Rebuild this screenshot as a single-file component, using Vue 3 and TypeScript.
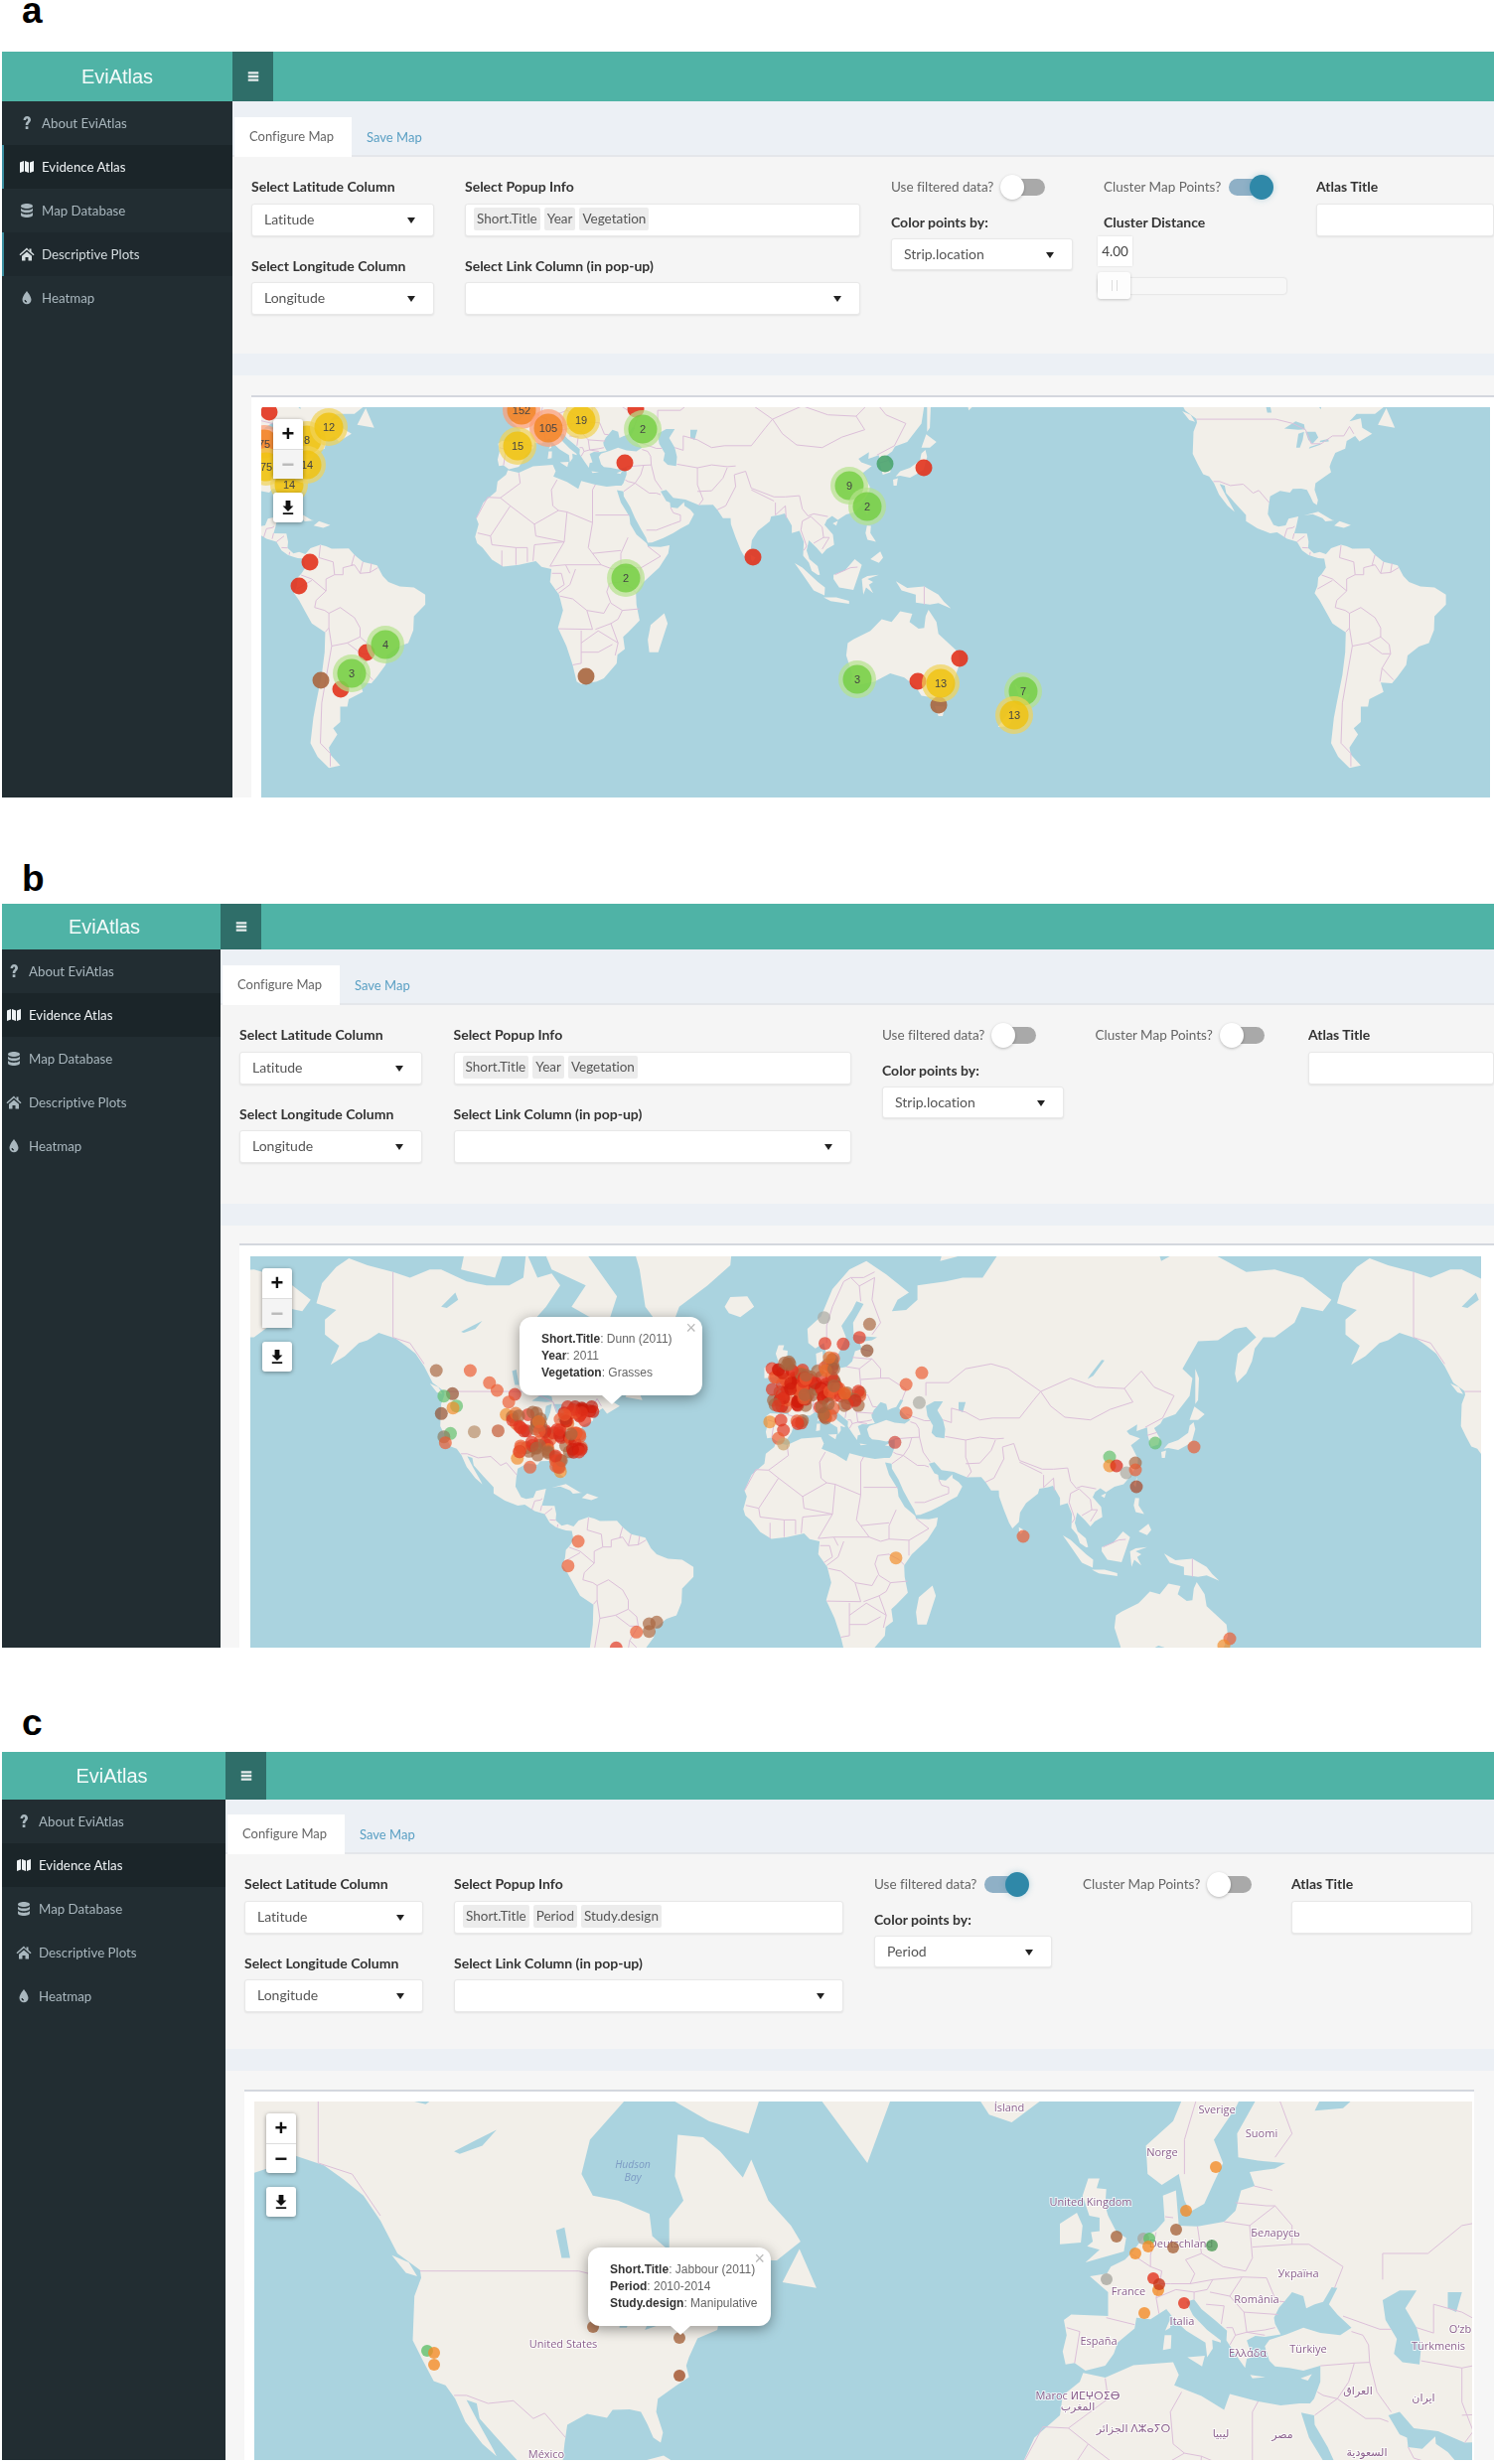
<template>
  <div class="page">
    <section
      v-for="panel in panels"
      :key="panel.id"
      class="figure"
      :class="`figure-${panel.id}`"
    >
      <div class="figure-tag">{{ panel.id }}</div>

      <div class="shell">
        <!-- 顶栏 -->
        <header class="topbar">
          <div class="brand">EviAtlas</div>
          <div class="menu-toggle">
            <svg viewBox="0 0 16 16" class="icon"><path d="M2 2.5h12v2.6H2zM2 6.7h12v2.6H2zM2 10.9h12v2.6H2z" /></svg>
          </div>
        </header>

        <div class="body">
          <!-- 侧边菜单 -->
          <aside class="sidebar">
            <div
              v-for="item in menu"
              :key="item.label"
              class="menu-item"
              :class="{
                active: item.label === 'Evidence Atlas',
                marked: panel.id === 'a' && item.label === 'Descriptive Plots',
              }"
            >
              <svg viewBox="0 0 16 16" class="icon"><path :d="item.icon" fill-rule="evenodd" /></svg>
              <span>{{ item.label }}</span>
            </div>
          </aside>

          <main class="content">
            <div class="tabs">
              <div class="tab current">Configure Map</div>
              <div class="tab">Save Map</div>
            </div>

            <div class="form">
              <div class="col">
                <div class="field-label">Select Latitude Column</div>
                <div class="select">Latitude<i class="caret" /></div>
                <div class="field-label second">Select Longitude Column</div>
                <div class="select">Longitude<i class="caret" /></div>
              </div>

              <div class="col">
                <div class="field-label">Select Popup Info</div>
                <div class="select chips">
                  <span
                    v-for="chip in panel.chips"
                    :key="chip"
                    class="chip"
                  >{{ chip }}</span>
                </div>
                <div class="field-label second">Select Link Column (in pop-up)</div>
                <div class="select"><i class="caret" /></div>
              </div>

              <div class="col">
                <div class="switch-row">
                  <span>Use filtered data?</span>
                  <span class="switch" :class="{ on: panel.filtered }"><i /></span>
                </div>
                <div class="field-label below">Color points by:</div>
                <div class="select short">{{ panel.colorBy }}<i class="caret" /></div>
              </div>

              <div class="col">
                <div class="switch-row">
                  <span>Cluster Map Points?</span>
                  <span class="switch" :class="{ on: panel.clustered }"><i /></span>
                </div>
                <template v-if="panel.clustered">
                  <div class="field-label below">Cluster Distance</div>
                  <div class="number-box">4.00</div>
                  <div class="slider"><span class="thumb" /></div>
                </template>
              </div>

              <div class="col">
                <div class="field-label">Atlas Title</div>
                <div class="select" />
              </div>
            </div>

            <div class="strip" />
            <div class="band" />

            <div class="card">
              <div class="map">
                <svg
                  class="map-svg"
                  :viewBox="panel.viewBox"
                  :width="panel.box[2]"
                  :height="panel.box[3]"
                >
                  <path :d="panel.land" fill="#f2efe9" />
                  <path :d="panel.water" fill="#aad3df" />
                  <path :d="panel.borders" class="border-line" />

                  <text
                    v-for="label in panel.labels"
                    :key="label.text"
                    :x="label.x"
                    :y="label.y"
                    class="map-label"
                    :class="{ water: label.water }"
                  >{{ label.text }}</text>

                  <circle
                    v-for="(dot, i) in panel.dots"
                    :key="i"
                    :cx="dot.x"
                    :cy="dot.y"
                    :r="panel.dotSize"
                    :fill="dot.color"
                    :opacity="panel.dotOpacity"
                  />

                  <g v-for="(c, i) in panel.clusters" :key="`c${i}`">
                    <circle :cx="c.x" :cy="c.y" r="19" :fill="clusterColors[c.tone][0]" />
                    <circle :cx="c.x" :cy="c.y" r="14.5" :fill="clusterColors[c.tone][1]" />
                    <text :x="c.x" :y="c.y + 4" class="cluster-count">{{ c.count }}</text>
                  </g>
                </svg>

                <!-- 缩放与下载按钮 -->
                <div class="zoom-control">
                  <div class="zoom-btn">+</div>
                  <div class="zoom-btn" :class="{ disabled: panel.id !== 'c' }">−</div>
                </div>
                <div class="download-btn">
                  <svg viewBox="0 0 16 16" class="icon"><path d="M5.600 1h4.800v5.600h3L8 12 2.600 6.600h3zM2.800 13.300h10.400V15H2.800z" /></svg>
                </div>

                <div v-if="panel.popup.length" class="popup">
                  <span class="popup-close">×</span>
                  <div v-for="row in panel.popup" :key="row[0]">
                    <b>{{ row[0] }}</b>: {{ row[1] }}
                  </div>
                  <i class="popup-tip" />
                </div>
              </div>
            </div>
          </main>
        </div>
      </div>
    </section>
  </div>
</template>

<script setup lang="ts">
type LonLat = [number, number]

interface Dot {
  x: number
  y: number
  color: string
}

interface Cluster {
  x: number
  y: number
  count: number
  tone: 'green' | 'yellow' | 'orange'
}

interface MapLabel {
  text: string
  x: number
  y: number
  water?: boolean
}

const RED = '#e2331d'
const SOFT = '#ec5a2f'
const BROWN = '#a8663f'
const ORANGE = '#f28c28'
const GREEN = '#5fbf6a'
const GREY = '#a8a8a0'

const clusterColors = {
  green: ['rgba(181,226,140,0.7)', 'rgba(110,204,57,0.75)'],
  yellow: ['rgba(241,211,87,0.7)', 'rgba(240,194,12,0.8)'],
  orange: ['rgba(253,156,115,0.7)', 'rgba(241,128,23,0.75)'],
}

const menu = [
  { label: 'About EviAtlas', icon: 'M4.500 5c0-2.300 1.600-4 3.800-4 2.100 0 3.700 1.500 3.700 3.600 0 2.700-2.700 3.200-2.700 5.400H6.700c0-3.400 2.500-3.800 2.500-5.300 0-.8-.4-1.200-1-1.200-.7 0-1.100.5-1.100 1.500zM6.700 11.200h2.700V14H6.700z' },
  { label: 'Evidence Atlas', icon: 'M1 3.500 5 2v10.500L1 14zM6 2l4 1.500V14l-4-1.500zM11 3.500 15 2v10.500L11 14z' },
  { label: 'Map Database', icon: 'M8 1c3.300 0 6 1.100 6 2.500S11.300 6 8 6 2 4.900 2 3.500 4.700 1 8 1zM2 5.300C2 6.700 4.700 7.600 8 7.600s6-.9 6-2.300v2.500c0 1.400-2.700 2.500-6 2.500S2 9.200 2 7.800zM2 9.600c0 1.400 2.700 2.300 6 2.300s6-.9 6-2.300v2.900C14 13.900 11.300 15 8 15s-6-1.100-6-2.500z' },
  { label: 'Descriptive Plots', icon: 'M8 1.500 .5 8.200l1 1L8 3.500l6.500 5.700 1-1-3-2.700V2.500h-2v2.200zM3 9.800 8 5.400l5 4.400v4.700H9.500v-3.500h-3v3.500H3z' },
  { label: 'Heatmap', icon: 'M8 1s-4.500 5.400-4.500 8.700a4.500 4.500 0 0 0 9 0C12.500 6.400 8 1 8 1zM5.600 10a2.400 2.400 0 0 0 2.400 2.500v-1.300A1.200 1.200 0 0 1 6.800 10z' },
]

/* ---------- 大陆与岛屿（经纬度） ---------- */
const landShapes: LonLat[][] = [
  // 北美
  [[-168,65.5],[-166,68.3],[-161,70.3],[-156.5,71.3],[-150,70.5],[-141,69.7],[-135,69],[-128,70],[-124,70],[-115,68.5],[-108,68],[-100,68],[-95,69],[-94,72],[-90,69],[-85,69.5],[-82,68],[-87,65],[-93,62],[-94.5,59],[-92.5,57],[-88,56.5],[-82.5,55.2],[-82,52.9],[-79,51.3],[-79,54.7],[-76.5,56.5],[-78,58.8],[-77.5,62.4],[-73,62.2],[-70,61],[-66,58.7],[-64.5,60.3],[-61.5,56.5],[-57.5,54],[-55.8,52.3],[-60,50.2],[-66.5,50.2],[-69,48.5],[-65,49.2],[-64.5,47],[-61,45.5],[-65.5,43.6],[-67,45],[-70,43.7],[-70.5,41.7],[-74,40.6],[-75.5,38],[-76,36.8],[-75.5,35.2],[-78,33.8],[-81,32],[-81.3,30],[-80.1,26.8],[-80.5,25.2],[-81.8,26],[-82.8,28],[-84,30],[-86,30.4],[-89,30.3],[-90,29.1],[-93.5,29.7],[-97,28],[-97.5,25],[-97.8,22.3],[-95.8,18.8],[-94,18.2],[-91.5,18.6],[-90.5,20.8],[-87,21.5],[-87.8,18.2],[-88.5,15.9],[-84,15.8],[-83.4,13],[-83.6,10.9],[-81.5,9],[-79.5,9.5],[-77.3,8.7],[-77.9,7.2],[-80,7.3],[-81.5,7.8],[-83.5,8.5],[-85.7,10],[-87.5,13],[-91,14],[-94.5,16.2],[-97,15.9],[-101.5,17.6],[-105.5,20],[-105.5,22],[-109,25.5],[-112.5,29],[-113,31.3],[-114.8,31.8],[-112.5,28],[-110,24],[-109.5,23],[-112,25],[-115,28.5],[-116.8,32],[-118.5,34],[-120.6,34.6],[-122.5,37.5],[-124.3,40.3],[-124,46],[-122.8,48.2],[-123,49.1],[-127,51],[-130,54.5],[-133,57],[-136.5,58.5],[-140,59.8],[-146,60.8],[-150,59.5],[-153,59],[-158,56.5],[-163,54.8],[-160,58.5],[-165,60.5],[-165,63],[-161,64.5],[-168,65.5]],
  [[-59,47.7],[-56,51.5],[-53,47],[-59,47.7]],
  [[-85,21.9],[-80,23.1],[-75,20.3],[-74.2,20.2],[-77.5,19.9],[-78.5,21],[-82,22.3],[-85,21.9]],
  [[-74.4,18.5],[-72.5,20],[-68.5,18.7],[-71,17.8],[-74.4,18.5]],
  [[-80,73.5],[-72,71.5],[-62,66.5],[-65,62.5],[-72,63.5],[-78,65],[-73,68],[-85,70],[-89,73],[-80,73.5]],
  [[-117,70],[-105,69],[-102,72],[-115,73],[-117,70]],
  [[-128,50.8],[-125,50],[-123.5,48.4],[-125.5,48.8],[-128,50.8]],
  [[-73,78],[-60,76],[-54,70],[-52,65],[-44,60],[-40,65],[-30,68],[-22,70.5],[-20,76],[-30,83],[-60,82],[-73,78]],
  // 南美
  [[-77.3,8.7],[-75.5,10.8],[-72,12],[-70,11.5],[-68,10.6],[-62,10.7],[-60,8.5],[-57,6],[-52,4.8],[-50,1],[-48,-1],[-44,-2.6],[-39,-3],[-35,-5.5],[-35,-9],[-39,-13],[-39.2,-17.8],[-41,-22],[-44.5,-23.2],[-48.5,-26],[-49,-29],[-52,-32.5],[-54,-34.5],[-58,-34.3],[-57,-37],[-62,-39],[-62.5,-41],[-65,-41],[-65,-45],[-67.5,-46.5],[-66,-48],[-69,-51],[-68.5,-52.5],[-65,-54.8],[-69,-55.3],[-73,-53],[-75.5,-50],[-74.5,-44],[-73.5,-40],[-71.5,-32],[-70.5,-25],[-70.3,-18.5],[-75,-15.5],[-77,-12],[-79.5,-7.5],[-81.3,-5],[-80.3,-2.5],[-80,0.5],[-78.8,1.8],[-77.3,4],[-77.9,7.2],[-77.3,8.7]],
  // 非洲
  [[-5.9,35.8],[-2,35.1],[3,36.9],[10,37.3],[11,35.5],[10.2,34],[15,32.4],[19,30.3],[20,32.7],[25,31.6],[29,31],[32.3,31.3],[34.2,31.3],[32.6,29.9],[34,26],[37,21.5],[37.3,19],[39.5,15.5],[43.2,12.4],[43.5,11.4],[48,11.2],[51.2,11.8],[50.7,9],[47.5,4],[42,-1],[39.3,-5],[39.5,-9],[40.6,-14.5],[36.5,-18.5],[34.8,-20],[35.4,-24],[32.8,-25.8],[32.5,-28.5],[28,-33],[25.5,-34],[20,-34.8],[18.4,-34],[17,-29],[14.8,-23],[11.8,-17],[13.6,-11],[12.2,-5.5],[9,-1],[9.5,3.5],[6,4.3],[4,6.3],[-2,5],[-7.5,4.4],[-11.5,6.8],[-14.8,11],[-16.7,12.5],[-17.4,14.7],[-16.2,19],[-17,21],[-14.5,26],[-10,29.5],[-9.5,32.5],[-6.5,34.5],[-5.9,35.8]],
  // 欧亚
  [[-5.5,36.1],[-2,36.8],[-0.5,38.5],[0.2,40],[3.2,41.9],[3.5,43.3],[6,43.1],[8.8,44.4],[10.3,43],[12.3,41.6],[15.7,40],[16,38],[17,39.2],[16.9,40.4],[18.4,40],[18.4,40.3],[16,41.7],[13.5,43.6],[12.3,45.3],[13.7,45.6],[15,44.4],[17.5,42.9],[19.5,41.6],[19.4,40.3],[21,38.4],[22.7,36.5],[23,37.8],[24,38],[23,40.3],[24.5,40.9],[26.2,40.8],[29,41.1],[28,42.5],[27.8,43.3],[28.7,44.6],[29.7,45.4],[31,46.5],[33,46],[33.5,44.5],[35,45],[36.5,45.3],[38,47.1],[39,47],[37.5,45],[39,43.7],[41.5,42],[39.5,41],[36,41.3],[33,42],[30,41.1],[27,40.4],[26.2,39.5],[27,37.5],[28,36.7],[30.5,36.5],[33,36.1],[36,36.8],[36,34.5],[34.9,32],[34.2,31.3],[32.6,29.9],[34.9,29.5],[35,28],[37.3,24.5],[39,21],[41,17.5],[42.8,14.5],[43.5,12.7],[45,12.8],[49,14.3],[52.5,16],[55,17.5],[58,19],[59.8,22.3],[58.5,23.7],[56.4,25],[56.3,26.2],[54,24.2],[51.5,24.5],[51.3,26],[50,26.5],[48,29.5],[50,30],[52.5,27.5],[56.8,27],[61.5,25.2],[66.5,25.3],[68,23.7],[70,21],[72.7,21],[72.8,19],[74.5,14.5],[76.3,10],[77.5,8],[79.8,10.3],[80.2,13.5],[82.3,16.7],[86.5,19.9],[87,21.5],[90,22],[91.8,22.5],[94.3,18.5],[94.3,16],[97,16.7],[98.5,13],[98.3,8.2],[100.3,5.8],[101.3,2.9],[103.5,1.4],[104.2,1.5],[103.4,4.5],[100.5,7],[99.5,10],[100.3,13.5],[103,11],[105,8.7],[106.5,10.5],[109.2,12],[108.8,15.5],[105.8,18.8],[106.7,20.5],[108.5,21.7],[110.5,20.4],[113.5,22.2],[116.7,23],[119,25.5],[121.7,29.5],[121.8,31],[120,34],[119.3,35],[122.5,37],[118.8,38],[117.8,39],[121.5,40.8],[121.3,39],[125,40],[125.3,37.7],[126.4,34.5],[129,35.2],[129.5,37],[127.5,39.8],[129.7,41],[130.7,42.3],[135,43.5],[140,48],[141,52],[137.5,54],[143,59.3],[150,59.5],[156,61.5],[160,61.8],[163.5,60],[157,57],[156,53],[156.7,51],[160,53],[162,55.5],[163,58],[166,60],[170,60],[177,62.5],[179.5,65],[187,64.3],[190,66],[180,69],[170,70],[160,69.7],[150,71.5],[140,72.7],[130,71],[128,73],[113,73.8],[105,77.5],[90,75.5],[80,73],[73,72],[67,69],[60,69],[54,68.5],[44,68],[44,66],[40,64.5],[35,64.3],[37,66],[41,67],[33,69.4],[26,71],[20,70],[14,67.5],[10,63.5],[5.2,61.5],[5.5,59],[8,58],[11,59],[12,56.5],[13,55.4],[15.5,56.2],[17,58],[18.8,60],[17.2,62],[21,64.5],[22.5,65.8],[25,65.4],[21.3,62.5],[21.5,60.5],[25,60.2],[29.8,60],[28,59.5],[23.5,59.2],[24.4,57.9],[22,57.5],[21,55.5],[19,54.4],[14.3,53.9],[11,54],[10.5,57.5],[8.2,57],[8.5,54.5],[7,53.5],[4.8,52.8],[3,51.3],[1.5,50.3],[-1,49.5],[-1.7,48.7],[-4.7,48.4],[-1.5,46.5],[-1.5,43.5],[-8,43.7],[-9.3,43],[-8.8,41],[-9.5,38.8],[-9,37],[-7.4,37.2],[-5.5,36.1]],
  [[-5.5,50],[1.3,51.2],[1.7,52.7],[0,53.3],[-1.5,55],[-2,56],[-1.8,57.6],[-3.5,57.7],[-3,58.6],[-5,58.6],[-6,57],[-4.8,55],[-3,54.8],[-3,53.4],[-4.5,53.3],[-4.2,52.3],[-5.2,51.8],[-3,51.4],[-5.5,50]],
  [[-10,52],[-6.3,52.2],[-6,54],[-7,55.3],[-10,54.2],[-10,52]],
  [[-24,65],[-22,66.4],[-16,66.5],[-13.6,65],[-18.5,63.4],[-22.5,64],[-24,65]],
  [[8.2,39],[8.5,41],[9.7,41],[9.6,39.2]],
  [[8.6,41.6],[9.4,43],[9.5,42]],
  [[12.5,38],[15.6,38.2],[15.1,36.7]],
  [[23.6,35.5],[26.3,35.2],[24,35]],
  [[32.5,35],[34.5,35.6],[33.8,34.7]],
  [[130.9,34],[132.5,35.5],[136,36.5],[139.5,38.5],[140,40.5],[141.4,41.4],[142,39.5],[140.8,36],[139,35],[136,33.6],[132.5,34.2],[130.9,34]],
  [[130,33],[131.7,33.5],[131.3,31.3],[130.2,31.3]],
  [[140,42],[141.7,45.4],[145.3,43.5],[143,42],[140,42]],
  [[142,46],[142,54],[143.3,52],[143,47]],
  [[120.2,23],[121.5,25.2],[121,22]],
  [[108.7,19.2],[110.5,20.1],[110,18.5]],
  [[79.8,8.5],[81.5,7.5],[80.5,6],[79.9,7]],
  [[120.3,16],[120.8,18.5],[122.2,18.4],[122,16],[124,13],[121,13.7]],
  [[122,7],[125.5,9.7],[126.5,7.5],[125,5.7]],
  [[95.3,5.6],[98,4],[103.5,-1],[106,-3],[105.8,-5.8],[102,-4],[98.5,1],[95.3,5.6]],
  [[105.5,-6.5],[110,-6.5],[114.5,-7.7],[114.5,-8.7],[108,-7.8]],
  [[109,1.5],[113,3],[116.5,7],[119,5],[117.7,1],[116,-3.8],[111,-3],[109,0]],
  [[119.5,-5.5],[119,0],[121,1],[125,1.5],[121,0],[123,-1],[121.5,-2],[123,-5],[120.5,-3]],
  [[131,-0.8],[135,-3.2],[141,-2.6],[146,-5.5],[148,-8],[150.5,-10.4],[146,-8.5],[143,-9],[138,-8.3],[138,-5.5],[133,-4],[131,-0.8]],
  [[114,-22],[113.5,-26],[115.7,-32],[115,-34.4],[118,-35],[123.5,-34],[129,-31.6],[134,-32.8],[137.8,-35.3],[140,-38],[144,-38.5],[146.5,-39],[150,-37.3],[151.5,-33.5],[153.5,-28.5],[153,-25],[149.5,-22],[146,-19],[145.3,-15],[142.5,-10.8],[141.5,-13],[141,-17],[139,-17.3],[135.8,-15],[136.8,-12.2],[132.5,-11.3],[129.5,-15],[126,-14],[122,-18],[116,-20.8],[114,-22]],
  [[144.7,-40.8],[148.3,-41],[147.5,-43.5],[146,-43.5]],
  [[172.8,-34.5],[176,-37.5],[178.5,-37.7],[175.3,-41.5],[174.7,-39],[172.8,-34.5]],
  [[172.7,-40.6],[174.2,-41.7],[170.7,-46],[167,-46.2],[172.7,-40.6]],
  [[49.3,-12],[50.5,-15.5],[47.2,-25],[44,-25],[43.5,-21],[44.5,-16],[49.3,-12]],
  [[52,71],[56,75],[68,77],[58,71.5]],
]

// 内陆水域
const waterShapes: LonLat[][] = [
  [[47,45.5],[50,46.7],[53,46.7],[51,44.5],[53,42],[53.8,39.5],[53.5,37],[50.5,37.3],[49,38.5],[49.5,40.5],[47.5,43],[47,45.5]],
  [[-92,46.8],[-88,48.5],[-85,47.8],[-84.7,46.6],[-87,46.5],[-92,46.8]],
  [[-87.8,42],[-87,45.5],[-85,46],[-85.5,44],[-86.5,42],[-87.8,42]],
  [[-84.5,46],[-81,46],[-80,44.6],[-82,43],[-83.5,44],[-84.5,46]],
  [[-83.3,41.7],[-79,42.8],[-79.5,43],[-83,42.2]],
  [[-79.5,43.4],[-76.3,43.6],[-76.5,44.2],[-79.3,43.8]],
  [[-98,50.5],[-96.5,50.5],[-97.5,53.8],[-99,53.5]],
  [[-117,61],[-113,62],[-109.5,62.8],[-112,61.5],[-116,60.8]],
  [[-124,65],[-119,67],[-118,66],[-122,64.8]],
  [[58.5,46.5],[61,46.5],[60,44],[58.5,44.5]],
  [[104,51.8],[106,52.5],[110,55.7],[109,55.8],[105,52.8]],
]

const borderLines: LonLat[][] = [
  [[-123,49],[-95,49],[-89,48],[-84.5,46.5],[-82.5,43],[-79,43],[-75,45],[-71,45],[-69,47.3],[-67.5,45.5]],
  [[-141,69.7],[-141,60],[-135,59],[-130,55]],
  [[-117,32.5],[-114.8,32.5],[-111,31.3],[-106.5,31.7],[-103,29],[-101,29.8],[-97.3,26]],
  [[-92,14.5],[-91,17.5],[-89,17.8],[-88.3,18.3]],
  [[-89,14],[-88.5,15.9]], [[-87.5,13],[-84.8,15]], [[-85.7,11],[-83.6,10.9]], [[-83,8.5],[-82.8,9.5]],
  [[-72,11.8],[-72.5,7.5],[-67.5,6],[-67,1.5]], [[-60,8.5],[-61,5],[-60.5,5]], [[-57,6],[-58,2]], [[-54,5.5],[-54.5,2.3]],
  [[-51.7,4],[-54.5,2.3],[-58,2],[-60,5],[-64,4],[-64,1.5],[-67,1.5],[-70,0],[-70,-4.2],[-73.5,-7.5],[-74,-10],[-70.5,-11],[-69,-12],[-65,-10],[-60,-13.5],[-58,-17],[-58,-20],[-55,-22.5],[-54.5,-25.5],[-57.5,-30],[-53.5,-33.5]],
  [[-78.8,1.4],[-75,0],[-70,-4.2]], [[-80.3,-3.5],[-75,-0.5]],
  [[-70.3,-18.4],[-69,-17],[-69,-12]], [[-69,-17],[-68,-23],[-62.5,-22],[-58,-20]],
  [[-62.5,-22],[-57.5,-25.5],[-54.5,-25.5]], [[-68,-23],[-70,-33],[-71.5,-40],[-72,-50],[-68.5,-52.3],[-68.5,-55]], [[-57.5,-30],[-58.3,-34]],
  // 非洲
  [[-8.5,27.5],[-13,27.7],[-17,21]], [[-2,35],[-1.5,32],[-8.5,27.5]], [[-8.5,27.5],[-5,25],[3.5,19],[12,23.5]], [[3.5,19],[4,15],[14,13]],
  [[11.5,33],[9.5,30],[10,25],[12,23.5],[15,23],[24,19.5],[24,30],[25,31.6]], [[25,22],[37,22]],
  [[24,19.5],[22.5,11],[27,5],[31,3.5],[34,4.3]], [[-5,25],[-12,15],[-11.5,12]], [[-12,15],[-16.5,16]],
  [[3,6.4],[3.5,12],[14,13],[9,4.5]], [[14,13],[15,23]],
  [[36.5,14.5],[34,9],[34,4.3],[41,3.9],[48,8],[43.5,11.5]], [[41,-1.5],[41,3.9]], [[33.9,-1],[37.6,-3],[39.3,-4.8]],
  [[34,-1],[30,-1.5],[29,-4.5],[30.5,-8.5],[34.5,-11],[40.5,-10.5]], [[12.5,-6],[17,-7],[22,-11],[28,-12],[30,-8.5]],
  [[18,3.5],[16,-2],[12,-5]], [[14.5,5],[27,5]], [[9,4.5],[14.5,5],[16,2]], [[9.7,2],[13,2],[14,-2],[11,-4]],
  [[12,-17.3],[24,-17.5],[22,-11]], [[20,-17.9],[20,-28.5],[17,-29]], [[20,-22],[26,-18],[33,-22],[32,-26]],
  [[25,-17.5],[30.5,-15.5],[33,-14],[34.5,-11]], [[30.5,-15.5],[33,-22]], [[20,-25],[26,-25],[31,-22.5]],
  [[-8,10],[-8,4.5]], [[-3,5],[-3,11],[1,11],[1,6]], [[-11.5,12],[-3,11]], [[24,9],[34,10]],
  // 欧洲
  [[-1.8,43.3],[3.2,42.4]], [[-8.8,42],[-6.5,41.5],[-7.4,37.2]], [[2.5,51],[6,49.5],[8,49],[7.6,47.5],[7,45.8],[7.5,43.8]],
  [[7,53.3],[6,50.8],[6,49.5]], [[8.6,54.9],[10,54.8]], [[14.3,53.9],[15,51],[12.2,50.3],[13.8,48.7],[13,47.5],[9.6,47.5],[7.6,47.5]],
  [[7,45.8],[10.5,46.8],[13.7,46.5],[13.7,45.6]], [[13,47.5],[17,48],[16,46.8],[13.7,46.5]],
  [[15,51],[18.8,49.5],[22.8,49],[24,50.5],[23.5,54],[19,54.4]], [[17,48],[22.2,48.3],[20,46],[16.5,46.5]],
  [[22.2,48.3],[26.5,48.2],[28.2,45.4],[29.7,45.3]], [[22.5,44],[28.5,43.7]], [[20,46],[22.5,44],[23,41.4],[26.2,41.7],[28,42]],
  [[20,39.7],[21,41],[23,41.4],[26.2,41]], [[19.4,42],[20.5,42],[21,41]], [[15.8,45],[19,44.8],[18.5,42.5]],
  [[24,51.7],[31,52],[34,52],[40,49.5],[38.5,47]], [[21,56.3],[26.5,56],[28,56],[23.5,54]], [[24.3,57.9],[27.5,57.5]],
  [[28,56],[31,54],[31,52]], [[23.5,67.9],[28.9,69],[28,66],[31,62.5],[28,60.5]],
  [[12,59],[12,62],[14,65],[18,68.5],[20.5,69],[25,69],[28.9,69.7]], [[20.5,69],[23.5,67.9],[24,65.8]],
  // 亚洲
  [[36,36.8],[42,37.2],[44.7,37.3],[44.5,39.7],[43.5,41],[41.5,41.5]], [[40,43.5],[46.5,41.8],[48.5,41.8]],
  [[44.7,37.3],[46,33],[48.5,30]], [[42,37.2],[41,34.5],[39,32],[36.5,32.5],[35.5,33]], [[39,32],[44,29],[46.5,29],[48,28.5]], [[35,29.5],[39,32]],
  [[43,17],[46.5,17],[52,19],[55,20],[55,22],[52.5,22.7],[51.5,24.5]], [[61,36.5],[61,31.5],[63,27],[61.5,25.2]],
  [[61,29.5],[66,29.7],[70,33.5],[71.5,36.5]], [[68,23.7],[71,25],[74.5,31],[74,34.5],[78,35.5]],
  [[53.8,37.5],[61,36.5],[66,37.3],[71.5,36.8],[74.5,37]], [[53,42],[56,41.3],[56,45],[61,44],[66,42],[70.5,42.5],[80,42.5]],
  [[80,42.5],[85,47],[87.5,49]], [[47,48],[47,51],[55,51],[61,54],[70,55],[76,54],[87.5,49]],
  [[87.5,49],[98,52],[107,50],[117,49.7],[120,46.5],[112,44.7],[105,42],[96,42.7],[91,45.5],[87.5,49]],
  [[78,35.5],[80,30.5],[88,27.8],[92,27.8],[97,28.2]], [[97,28.2],[98,24],[100,21.7],[102,22.4],[107,21.5]],
  [[80,30],[88,26.5]], [[88.5,26],[88.5,22],[92,25],[92.3,21]], [[98,20],[101,21.5],[105,18],[105.5,14.5],[102,12.5]],
  [[98.5,10],[99.5,11.5],[97.5,17],[98,20]], [[105.5,14.5],[107.5,14.5],[105,10.5]],
  [[124.3,40],[130.5,42.5],[134.5,48],[127.5,50],[123,53.5],[117,49.7]], [[125,37.8],[128.4,38.6]],
  [[109.5,1.5],[115,4],[117.5,4.2]], [[141,-2.6],[141,-9]],
]

// 墨卡托投影，所有坐标直接用截图页面坐标
function buildPath(
  shapes: LonLat[][],
  closed: boolean,
  x0: number,
  y0: number,
  k: number,
): string {
  const parts: string[] = []
  for (const shift of [-360, 0, 360]) {
    for (const shape of shapes) {
      const pts = shape.map(([lon, lat]) => {
        const merc = Math.log(Math.tan(Math.PI / 4 + (lat * Math.PI) / 360))
        const x = x0 + k * (lon + shift)
        const y = y0 - k * 57.2958 * merc
        return `${x.toFixed(1)} ${y.toFixed(1)}`
      })
      parts.push(`M${pts.join('L')}${closed ? 'Z' : ''}`)
    }
  }
  return parts.join('')
}

/* ---------- 面板 b 的散点 ---------- */
let seed = 17
function rand(): number {
  seed = (seed * 16807) % 2147483647
  return seed / 2147483647
}

// 放大图坐标换算成页面坐标
function fromZoomB(X: number, Y: number, color: string): Dot {
  return { x: 230 + X / 1.96, y: 1250 + Y / 3, color }
}

function scatter(cx: number, cy: number, sx: number, sy: number, n: number, colors: string[]): Dot[] {
  const out: Dot[] = []
  for (let i = 0; i < n; i++) {
    const X = cx + (rand() * 2 - 1) * sx
    const Y = cy + (rand() * 2 - 1) * sy
    out.push(fromZoomB(X, Y, colors[Math.floor(rand() * colors.length)]))
  }
  return out
}

const warm = [RED, SOFT, SOFT, '#d62a18', BROWN, BROWN, '#e8702c']
const deep = ['#d11c0c', '#d11c0c', RED, SOFT, BROWN]

const dotsB: Dot[] = [
  ...([
    [410, 390, BROWN], [477, 390, SOFT], [515, 427, SOFT], [530, 450, SOFT], [565, 462, RED], [553, 485, SOFT],
    [442, 460, '#8f4a2a'], [425, 467, GREEN], [450, 497, GREEN], [443, 503, ORANGE], [420, 520, '#8f4a2a'], [548, 523, ORANGE],
    [438, 580, GREEN], [425, 590, '#8a7a60'], [428, 608, SOFT], [485, 575, '#b58a66'], [532, 572, '#c2552f'],
    [595, 682, SOFT], [570, 655, ORANGE], [655, 695, ORANGE], [690, 906, SOFT], [670, 980, SOFT],
    [1317, 956, ORANGE], [805, 1180, SOFT], [830, 1155, BROWN], [845, 1150, BROWN], [830, 1178, BROWN], [765, 1228, RED],
    [1175, 230, GREY], [1265, 250, BROWN], [1245, 290, RED], [1213, 310, RED], [1177, 308, RED], [1260, 330, '#8f4a2a'],
    [1368, 397, SOFT], [1337, 432, SOFT], [1363, 487, GREY], [1337, 518, SOFT], [1315, 607, '#d0453a'],
    [1068, 545, ORANGE], [1090, 540, RED], [1095, 570, RED], [1085, 595, SOFT], [1095, 612, '#c9a26a'],
  ] as [number, number, string][]).map(([X, Y, c]) => fromZoomB(X, Y, c)),
  ...scatter(590, 545, 30, 30, 16, warm),
  ...scatter(640, 575, 32, 42, 22, warm),
  ...scatter(690, 520, 30, 24, 20, deep),
  ...scatter(682, 610, 16, 32, 16, deep),
  ...scatter(600, 630, 32, 24, 16, warm),
  ...scatter(650, 670, 8, 22, 8, warm),
  ...scatter(1105, 440, 34, 60, 55, deep),
  ...scatter(1165, 440, 38, 38, 36, deep),
  ...scatter(1220, 465, 28, 32, 18, warm),
  ...scatter(1178, 370, 18, 22, 10, warm),
  ...scatter(1100, 365, 10, 18, 4, [BROWN]),
  ...scatter(1180, 510, 18, 26, 10, warm),
  ...scatter(1125, 545, 10, 12, 4, warm),
  { x: 1117, y: 1467, color: GREEN },
  { x: 1117, y: 1476, color: ORANGE },
  { x: 1124, y: 1476, color: '#d81a0c' },
  { x: 1134, y: 1483, color: GREY },
  { x: 1143, y: 1473, color: BROWN },
  { x: 1143, y: 1480, color: SOFT },
  { x: 1144, y: 1497, color: '#a8401f' },
  { x: 1163, y: 1453, color: GREEN },
  { x: 1202, y: 1457, color: SOFT },
  { x: 1030, y: 1547, color: SOFT },
  { x: 1238, y: 1650, color: SOFT },
  { x: 1232, y: 1657, color: ORANGE },
]

function dotList(rows: [number, number, string][]): Dot[] {
  return rows.map(([x, y, color]) => ({ x, y, color }))
}

function build(x0: number, y0: number, k: number) {
  return {
    land: buildPath(landShapes, true, x0, y0, k),
    water: buildPath(waterShapes, true, x0, y0, k),
    borders: buildPath(borderLines, false, x0, y0, k),
  }
}

function viewBoxOf(box: number[]): string {
  return box.join(' ')
}

const clustersA: Cluster[] = [
  { x: 266, y: 447, count: 75, tone: 'orange' },
  { x: 268, y: 470, count: 75, tone: 'yellow' },
  { x: 291, y: 488, count: 14, tone: 'yellow' },
  { x: 309, y: 443, count: 8, tone: 'yellow' },
  { x: 309, y: 468, count: 14, tone: 'yellow' },
  { x: 331, y: 430, count: 12, tone: 'yellow' },
  { x: 525, y: 413, count: 152, tone: 'orange' },
  { x: 585, y: 423, count: 19, tone: 'yellow' },
  { x: 552, y: 431, count: 105, tone: 'orange' },
  { x: 521, y: 449, count: 15, tone: 'yellow' },
  { x: 647, y: 432, count: 2, tone: 'green' },
  { x: 855, y: 489, count: 9, tone: 'green' },
  { x: 873, y: 510, count: 2, tone: 'green' },
  { x: 630, y: 582, count: 2, tone: 'green' },
  { x: 388, y: 649, count: 4, tone: 'green' },
  { x: 354, y: 678, count: 3, tone: 'green' },
  { x: 863, y: 684, count: 3, tone: 'green' },
  { x: 947, y: 688, count: 13, tone: 'yellow' },
  { x: 1030, y: 696, count: 7, tone: 'green' },
  { x: 1021, y: 720, count: 13, tone: 'yellow' },
]

const dotsA = dotList([
  [271, 415, RED], [640, 412, RED], [629, 466, RED], [891, 467, '#4aa46e'], [930, 471, RED], [758, 561, RED],
  [312, 566, RED], [301, 590, RED], [369, 657, RED], [323, 685, BROWN], [343, 694, RED], [590, 681, BROWN],
  [924, 686, RED], [945, 710, BROWN], [966, 663, RED],
])

const dotsC = dotList([
  [597, 2343, BROWN], [684, 2354, BROWN], [430, 2367, GREEN], [437, 2369, ORANGE], [437, 2381, ORANGE], [684, 2392, '#a04f28'],
  [1224, 2182, ORANGE], [1194, 2226, ORANGE], [1184, 2245, BROWN], [1124, 2252, BROWN], [1151, 2254, GREY], [1157, 2254, GREEN],
  [1156, 2262, ORANGE], [1143, 2269, ORANGE], [1181, 2263, BROWN], [1220, 2261, '#4f9a58'], [1114, 2295, GREY],
  [1161, 2294, RED], [1166, 2306, ORANGE], [1167, 2300, '#c8361c'], [1192, 2319, RED], [1152, 2329, ORANGE],
])

const labelsC: MapLabel[] = [
  { text: 'Hudson', x: 637, y: 2183, water: true },
  { text: 'Bay', x: 637, y: 2196, water: true },
  { text: 'United States', x: 567, y: 2364 },
  { text: 'México', x: 550, y: 2475 },
  { text: 'Ísland', x: 1016, y: 2126 },
  { text: 'Sverige', x: 1225, y: 2128 },
  { text: 'Suomi', x: 1270, y: 2152 },
  { text: 'Norge', x: 1170, y: 2171 },
  { text: 'United Kingdom', x: 1098, y: 2221 },
  { text: 'Беларусь', x: 1284, y: 2252 },
  { text: 'Deutschland', x: 1189, y: 2263 },
  { text: 'Україна', x: 1307, y: 2293 },
  { text: 'France', x: 1136, y: 2311 },
  { text: 'România', x: 1265, y: 2319 },
  { text: 'Italia', x: 1190, y: 2341 },
  { text: 'España', x: 1106, y: 2361 },
  { text: 'Türkiye', x: 1317, y: 2369 },
  { text: 'Ελλάδα', x: 1256, y: 2373 },
  { text: 'O‘zb', x: 1470, y: 2349 },
  { text: 'Türkmenis', x: 1448, y: 2366 },
  { text: 'Maroc ⵍⵎⵖⵔⵉⴱ', x: 1085, y: 2416 },
  { text: 'المغرب', x: 1085, y: 2427 },
  { text: 'الجزائر ⴷⵣⴰⵢⵔ', x: 1141, y: 2449 },
  { text: 'ليبيا', x: 1229, y: 2454 },
  { text: 'مصر', x: 1291, y: 2455 },
  { text: 'ايران', x: 1433, y: 2418 },
  { text: 'العراق', x: 1367, y: 2411 },
  { text: 'السعودية', x: 1376, y: 2473 },
]

const boxA = [263, 410, 1237, 393]
const boxB = [252, 1265, 1239, 394]
const boxC = [256, 2116, 1226, 361]

const panels = [
  {
    id: 'a',
    chips: ['Short.Title', 'Year', 'Vegetation'],
    filtered: false,
    clustered: true,
    colorBy: 'Strip.location',
    box: boxA,
    viewBox: viewBoxOf(boxA),
    ...build(528, 583, 2.854),
    dots: dotsA,
    dotSize: 8.5,
    dotOpacity: 0.9,
    clusters: clustersA,
    labels: [] as MapLabel[],
    popup: [] as [string, string][],
  },
  {
    id: 'b',
    chips: ['Short.Title', 'Year', 'Vegetation'],
    filtered: false,
    clustered: false,
    colorBy: 'Strip.location',
    box: boxB,
    viewBox: viewBoxOf(boxB),
    ...build(798, 1562, 2.854),
    dots: dotsB,
    dotSize: 6.5,
    dotOpacity: 0.68,
    clusters: [] as Cluster[],
    labels: [] as MapLabel[],
    popup: [['Short.Title', 'Dunn (2011)'], ['Year', '2011'], ['Vegetation', 'Grasses']] as [string, string][],
  },
  {
    id: 'c',
    chips: ['Short.Title', 'Period', 'Study.design'],
    filtered: true,
    clustered: false,
    colorBy: 'Period',
    box: boxC,
    viewBox: viewBoxOf(boxC),
    ...build(1124, 2608, 5.7),
    dots: dotsC,
    dotSize: 6,
    dotOpacity: 0.8,
    clusters: [] as Cluster[],
    labels: labelsC,
    popup: [['Short.Title', 'Jabbour (2011)'], ['Period', '2010-2014'], ['Study.design', 'Manipulative']] as [string, string][],
  },
]
</script>

<style>
html,
body {
  margin: 0;
  background: #fff;
}
</style>

<style scoped>
.page {
  width: 1504px;
  height: 2481px;
  overflow: hidden;
  font-family: Lato, 'Liberation Sans', sans-serif;
  font-size: 13.5px;
  font-variant-ligatures: none;
  color: #555;
}

/* 每个面板的尺寸 */
.figure-a {
  --side: 232px;
  --head: 50px;
  --item-pad: 17px;
  --brand-shift: 0px;
  --tabs: 56px;
  --form: 198px;
  --band: 20px;
  --pad: 10px;
  --map: 393px;
  --columns: 184px 398px 183px 183px 1fr;
  --gap: 31px;
  --card-left: 19px;
  --card-right: 0px;
  --map-right: 4px;
  --map-left: 10px;
}

.figure-b {
  --side: 220px;
  --head: 46px;
  --item-pad: 4px;
  --brand-shift: 14px;
  --tabs: 56px;
  --form: 200px;
  --band: 18px;
  --pad: 11px;
  --map: 394px;
  --columns: 184px 400px 183px 183px 1fr;
  --gap: 31.5px;
  --card-left: 19px;
  --card-right: 0px;
  --map-right: 13px;
  --map-left: 11px;
}

.figure-c {
  --side: 225px;
  --head: 48px;
  --item-pad: 14px;
  --brand-shift: 4px;
  --tabs: 55px;
  --form: 196px;
  --band: 19px;
  --pad: 10px;
  --map: 361px;
  --columns: 180px 392px 179px 179px 182px;
  --gap: 31px;
  --card-left: 19px;
  --card-right: 20px;
  --map-right: 2px;
  --map-left: 10px;
}

.figure-tag {
  height: 52px;
  padding-left: 22px;
  box-sizing: border-box;
  font-family: 'Liberation Sans', Arial, sans-serif;
  font-weight: 700;
  font-size: 37px;
  line-height: 22px;
  color: #000;
}

.figure-b .figure-tag {
  height: 107px;
  padding-top: 71px;
}

.figure-c .figure-tag {
  height: 105px;
  padding-top: 65px;
}

.shell {
  margin-left: 2px;
  overflow: hidden;
  filter: blur(0.4px);
}

.icon {
  width: 16px;
  height: 16px;
  fill: currentColor;
  flex-shrink: 0;
}

.topbar {
  display: flex;
  height: var(--head);
  background: #4fb3a6;
}

.brand {
  width: var(--side);
  box-sizing: border-box;
  padding-right: var(--brand-shift);
  font-family: 'Liberation Sans', Arial, sans-serif;
  font-size: 20px;
  line-height: var(--head);
  text-align: center;
  color: #f4fbfa;
}

.menu-toggle {
  display: flex;
  align-items: center;
  justify-content: center;
  width: 41px;
  background: #2f6e69;
  color: #e6ecec;
}

.menu-toggle .icon {
  width: 14px;
  height: 14px;
}

.body {
  display: flex;
}

.sidebar {
  flex-shrink: 0;
  width: var(--side);
  background: #222d32;
}

.menu-item {
  display: flex;
  align-items: center;
  gap: 7px;
  height: 44px;
  box-sizing: border-box;
  padding-left: var(--item-pad);
  font-size: 13.3px;
  color: #a9b7be;
}

.menu-item.active {
  background: #1b2529;
  color: #eef2f4;
}

.figure-a .menu-item.active,
.menu-item.marked {
  box-shadow: inset 2px 0 0 #3a8ea0;
}

.menu-item.marked {
  background: #1e282d;
  color: #d5dde0;
}

.content {
  flex: 1;
  min-width: 0;
  background: #f6f6f6;
}

.tabs {
  display: flex;
  align-items: flex-end;
  height: var(--tabs);
  box-sizing: border-box;
  padding-left: 2px;
  background: #ecf0f5;
  border-bottom: 2px solid #e4e6ea;
}

.tab {
  display: flex;
  align-items: center;
  height: 38px;
  box-sizing: border-box;
  padding: 0 18px 2px 15px;
  margin-bottom: -2px;
  font-size: 13px;
  color: #5ba0c4;
}

.tab.current {
  height: 40px;
  background: #fff;
  color: #666;
}

.form {
  display: grid;
  grid-template-columns: var(--columns);
  column-gap: var(--gap);
  height: var(--form);
  box-sizing: border-box;
  padding: 21px 0 0 19px;
  background: #f5f5f5;
}

.col {
  min-width: 0;
}

.field-label {
  height: 18px;
  margin-bottom: 8px;
  font-size: 14px;
  font-weight: 700;
  line-height: 18px;
  white-space: nowrap;
  color: #333;
}

.field-label.second {
  margin-top: 21px;
  margin-bottom: 7px;
}

.field-label.below {
  margin-top: 18px;
  margin-bottom: 7px;
}

.select {
  position: relative;
  display: flex;
  align-items: center;
  height: 33px;
  box-sizing: border-box;
  padding: 0 0 2px 12px;
  background: #fff;
  border: 1px solid #e8e8e8;
  border-radius: 3px;
  box-shadow: 0 1px 2px rgba(0, 0, 0, 0.08);
  font-size: 14px;
  color: #555;
}

.select.short {
  height: 32px;
}

.select.chips {
  gap: 4px;
  padding-left: 8px;
  font-size: 13.5px;
}

.chip {
  padding: 3px 3px;
  line-height: 17px;
  background: #ececec;
  border-radius: 2px;
}

.caret {
  position: absolute;
  top: 13px;
  right: 18px;
  border-top: 6px solid #222;
  border-right: 4px solid transparent;
  border-left: 4px solid transparent;
}

.switch-row {
  display: flex;
  align-items: center;
  gap: 8px;
  height: 18px;
  white-space: nowrap;
  color: #666;
}

.switch {
  position: relative;
  display: inline-block;
  width: 44px;
  height: 17px;
  background: #a9a9a9;
  border-radius: 9px;
}

.switch i {
  position: absolute;
  top: -4px;
  left: -1px;
  width: 24px;
  height: 25px;
  background: #fff;
  border-radius: 50%;
  box-shadow: 0 1px 3px rgba(0, 0, 0, 0.25);
}

.switch.on {
  background: #8fb0c6;
}

.switch.on i {
  left: 21px;
  background: #2f88a8;
  box-shadow: 0 0 6px rgba(47, 136, 168, 0.3);
}

.number-box {
  width: 35px;
  height: 30px;
  margin: -2px 0 7px -6px;
  line-height: 30px;
  text-align: center;
  background: #fff;
  box-shadow: 0 0 2px rgba(0, 0, 0, 0.12);
  color: #444;
}

.slider {
  position: relative;
  width: 190px;
  height: 16px;
  margin: 12px 0 0 -6px;
  background: #f7f7f7;
  border-radius: 3px;
  box-shadow: 0 0 2px rgba(0, 0, 0, 0.2);
}

.thumb {
  position: absolute;
  top: -6px;
  left: 0;
  width: 33px;
  height: 27px;
  background: #fdfdfd;
  border-radius: 3px;
  box-shadow: 0 1px 3px rgba(0, 0, 0, 0.2);
}

.thumb::after {
  content: '';
  position: absolute;
  top: 8px;
  left: 14px;
  width: 4px;
  height: 11px;
  border-right: 1px solid #ddd;
  border-left: 1px solid #ddd;
}

.strip {
  height: 22px;
  background: #ecf0f5;
}

.band {
  height: var(--band);
  background: #f6f6f6;
}

.card {
  margin: 0 var(--card-right) 0 var(--card-left);
  padding: var(--pad) var(--map-right) 0 var(--map-left);
  background: #fff;
  border-top: 2px solid #d4d7de;
}

.map {
  position: relative;
  height: var(--map);
  overflow: hidden;
  background: #aad3df;
}

.map-svg {
  display: block;
}

.border-line {
  fill: none;
  stroke: #dcbfd9;
  stroke-width: 1;
  stroke-linejoin: round;
}

.map-label {
  font-family: 'Open Sans', 'DejaVu Sans', sans-serif;
  font-size: 11px;
  text-anchor: middle;
  fill: #8a5f8c;
  stroke: rgba(255, 255, 255, 0.75);
  stroke-width: 2px;
  paint-order: stroke;
}

.map-label.water {
  font-style: italic;
  font-size: 10.5px;
  fill: #7d9cc4;
  stroke: none;
}

.cluster-count {
  font-family: 'Liberation Sans', Arial, sans-serif;
  font-size: 11px;
  text-anchor: middle;
  fill: #444;
}

.zoom-control,
.download-btn {
  position: absolute;
  left: 12px;
  width: 30px;
  background: #fff;
  border-radius: 3px;
  box-shadow: 0 1px 4px rgba(0, 0, 0, 0.4);
}

.zoom-control {
  top: 12px;
}

.zoom-btn {
  height: 30px;
  font-family: 'Liberation Sans', Arial, sans-serif;
  font-size: 22px;
  font-weight: 700;
  line-height: 30px;
  text-align: center;
  color: #111;
}

.zoom-btn + .zoom-btn {
  border-top: 1px solid #ddd;
  height: 29px;
}

.zoom-btn.disabled {
  background: #f4f4f4;
  color: #bbb;
}

.download-btn {
  top: 86px;
  display: flex;
  align-items: center;
  justify-content: center;
  height: 30px;
  color: #111;
}

.popup {
  position: absolute;
  width: 184px;
  height: 79px;
  box-sizing: border-box;
  padding: 14px 0 0 22px;
  background: #fff;
  border-radius: 12px;
  box-shadow: 0 3px 14px rgba(0, 0, 0, 0.4);
  font-family: 'Liberation Sans', Arial, sans-serif;
  font-size: 12px;
  line-height: 17px;
  white-space: nowrap;
  color: #666;
}

.figure-b .popup {
  top: 61px;
  left: 271px;
}

.figure-c .popup {
  top: 147px;
  left: 336px;
}

.popup b {
  color: #333;
}

.popup-close {
  position: absolute;
  top: 3px;
  right: 6px;
  font-size: 18px;
  color: #bbb;
}

.popup-tip {
  position: absolute;
  bottom: -9px;
  left: 83px;
  width: 0;
  height: 0;
  border-top: 9px solid #fff;
  border-right: 10px solid transparent;
  border-left: 10px solid transparent;
}
</style>
